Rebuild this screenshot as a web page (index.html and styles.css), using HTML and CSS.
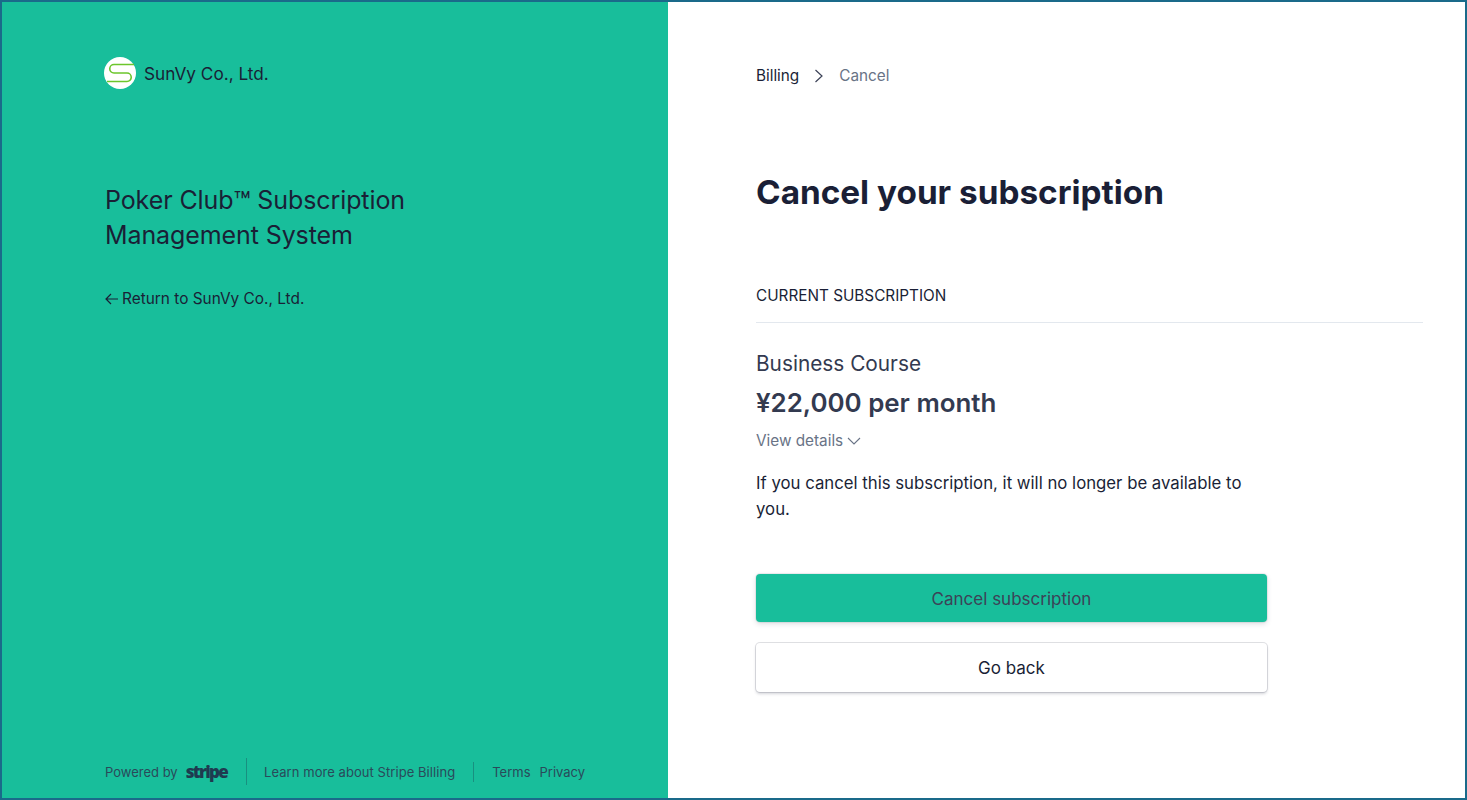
FILE: index.html
```html
<!DOCTYPE html>
<html lang="en">
<head>
<meta charset="utf-8">
<title>Cancel your subscription</title>
<link rel="stylesheet" href="styles.css">
</head>
<body>
<div class="frame">
  <aside class="side">
    <div class="brand">
      <svg class="logo" width="32" height="32" viewBox="0 0 32 32" aria-hidden="true">
        <circle cx="16" cy="16" r="16" fill="#fff"/>
        <path d="M30 7.500H10a4.250 4.250 0 0 0 0 8.500h13a4.250 4.250 0 0 1 0 8.500H3" fill="none" stroke="#6cc62c" stroke-width="1.600"/>
      </svg>
      <span class="brand-name">SunVy Co., Ltd.</span>
    </div>
    <h2 class="headline">Poker Club<span class="tm">™</span> Subscription<br>Management System</h2>
    <a class="return" href="#">
      <svg width="13" height="12" viewBox="0 0 13 12" aria-hidden="true"><path d="M13 6H1M6 1 1 6l5 5" fill="none" stroke="#1a1f36" stroke-width="1.200"/></svg>
      <span>Return to SunVy Co., Ltd.</span>
    </a>
    <footer class="foot">
      <span class="powered">Powered by <b class="stripe">stripe</b></span>
      <span class="sep tall"></span>
      <a class="learn" href="#">Learn more about Stripe Billing</a>
      <span class="sep"></span>
      <span class="legal"><a href="#">Terms</a><a href="#">Privacy</a></span>
    </footer>
  </aside>
  <main class="content">
    <nav class="crumbs">
      <a href="#">Billing</a>
      <svg width="10" height="14" viewBox="0 0 10 14" aria-hidden="true"><path d="M1.500 1 8 7l-6.500 6" fill="none" stroke="#3c4257" stroke-width="1.200"/></svg>
      <span class="current">Cancel</span>
    </nav>
    <h1 class="title">Cancel your subscription</h1>
    <h3 class="section">CURRENT SUBSCRIPTION</h3>
    <div class="plan">Business Course</div>
    <div class="price">¥22,000 per month</div>
    <a class="details" href="#">View details
      <svg width="14" height="8" viewBox="0 0 14 8" aria-hidden="true"><path d="M1 1l6 6 6-6" fill="none" stroke="#697386" stroke-width="1.100"/></svg>
    </a>
    <p class="note">If you cancel this subscription, it will no longer be available to you.</p>
    <button class="btn primary">Cancel subscription</button>
    <button class="btn secondary">Go back</button>
  </main>
</div>
</body>
</html>
```
FILE: styles.css
```css
* { box-sizing: border-box; }
html, body { margin: 0; padding: 0; background: #fff; }
body { font-family: Inter, "Liberation Sans", sans-serif; color: #1a1f36; }
a { color: inherit; text-decoration: none; }
.frame { width: 1467px; height: 800px; border: 2px solid #1a6a8a; display: flex; overflow: hidden; }
.side { width: 666px; background: #18be9b; padding: 55px 0 0 102px; display: flex; flex-direction: column; }
.brand { display: flex; align-items: center; gap: 8px; height: 32px; }
.logo { display: block; flex: none; }
.brand-name { font-size: 17.200px; font-weight: 400; line-height: 32px; padding-top: 2px; color: #1a1f36; }
.headline { margin: 94px 0 0 1px; font-size: 25px; line-height: 35px; font-weight: 400; color: #1a1f36; letter-spacing: -0.1px; }
.tm { font-size: 1.120em; line-height: 0; vertical-align: -0.12em; }
.return { margin: 36px 0 0 1px; display: flex; align-items: center; gap: 4px; font-size: 15.400px; line-height: 20px; font-weight: 400; }
.foot { margin: auto 0 13px 1px; height: 27px; display: flex; align-items: center; font-size: 13px; color: #2a4a5a; }
.powered { display: flex; align-items: center; gap: 8px; }
.stripe { font-family: "Open Sans", sans-serif; font-weight: 800; font-size: 17px; letter-spacing: -1.700px; line-height: 20px; color: #1f3a50; }
.sep { width: 1px; height: 20px; background: rgba(26,106,106,.55); margin: 0 18px; }
.sep.tall { height: 27px; margin-left: 19px; margin-right: 17px; }
.learn { letter-spacing: 0.060px; }
.legal { display: flex; gap: 9px; }
.content { flex: 1; padding: 0 42px 0 88px; }
.crumbs { margin-top: 64px; height: 20px; display: flex; align-items: center; gap: 15px; font-size: 15.300px; line-height: 20px; font-weight: 400; }
.crumbs .current { color: #697386; font-weight: 400; }
.title { margin: 84px 0 0; font-size: 33.300px; line-height: 44px; font-weight: 700; color: #1a1f36; }
.section { margin: 72px 0 0; height: 37px; font-size: 15.300px; line-height: 19px; font-weight: 400; border-bottom: 1px solid #e3e8ee; color: #1a1f36; }
.plan { margin-top: 27px; font-size: 20.800px; line-height: 28px; color: #333a50; font-weight: 400; }
.price { margin-top: 9px; font-size: 25.900px; line-height: 32px; font-weight: 600; color: #333a50; }
.details { margin-top: 12px; display: flex; align-items: center; gap: 4px; font-size: 15.300px; line-height: 20px; color: #697386; }
.note { margin: 19px 0 0; width: 511px; font-size: 16.750px; line-height: 26px; color: #1a1f36; }
.btn { display: block; width: 511px; border-radius: 4px; font: 400 17px/24px Inter, sans-serif; }
.primary { margin-top: 52px; height: 48px; padding-top: 3px; background: #18be9b; color: #3c4257; border: 0; box-shadow: 0 0 0 1px rgba(60,66,87,.08), 0 2px 5px rgba(60,66,87,.18); }
.secondary { margin-top: 21px; height: 49px; background: #fff; color: #1a1f36; border: 0; box-shadow: 0 0 0 1px rgba(60,66,87,.16), 0 2px 3px rgba(60,66,87,.22); }
```
